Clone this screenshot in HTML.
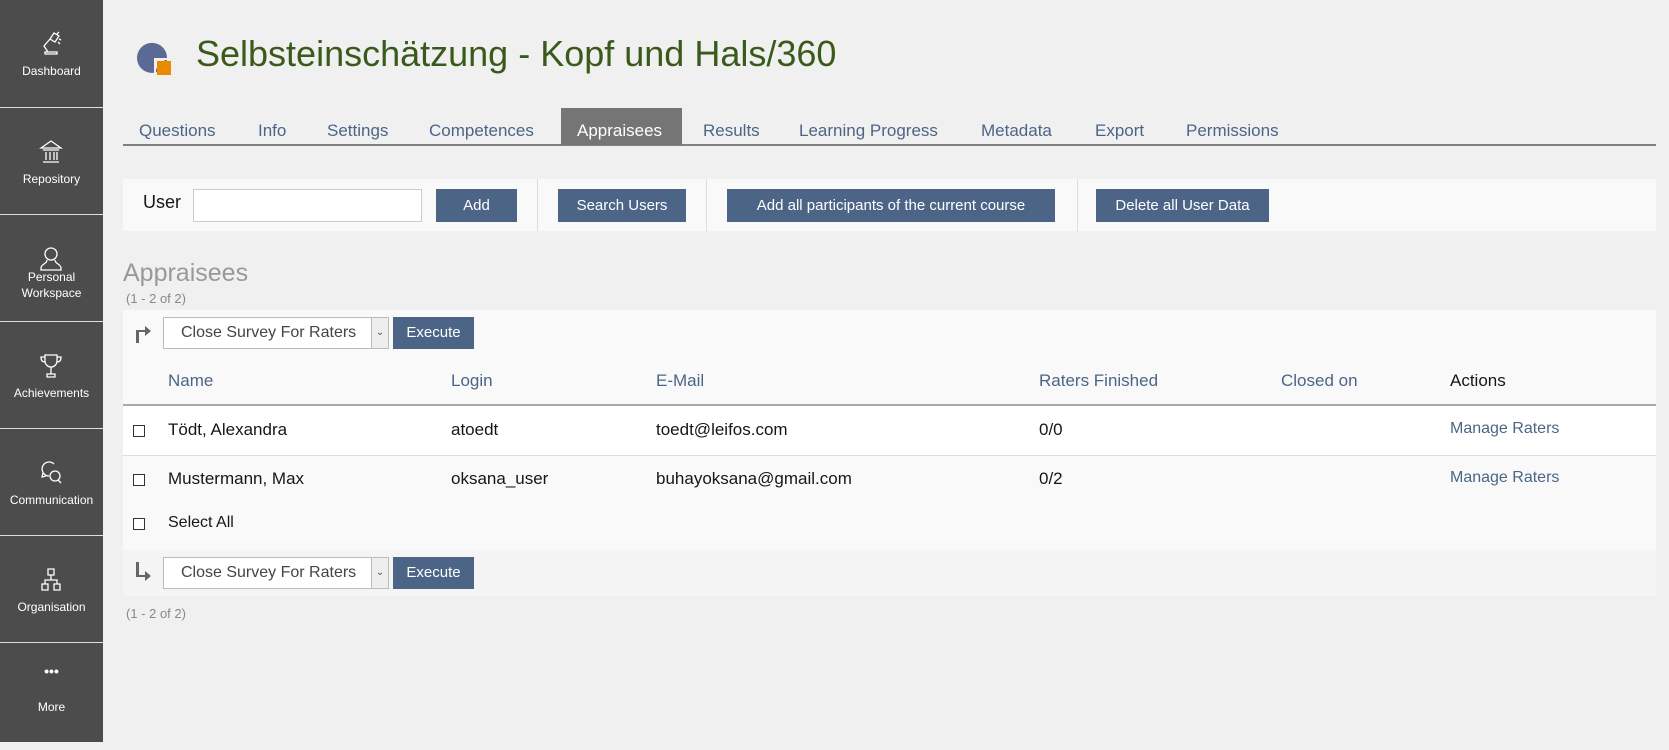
<!DOCTYPE html>
<html><head><meta charset="utf-8"><style>
*{box-sizing:border-box;margin:0;padding:0}
body{width:1669px;height:742px;background:#f0f0f0;font-family:"Liberation Sans",sans-serif;position:relative;overflow:hidden;color:#161616}
.sb{position:absolute;left:0;top:0;width:103px;height:742px;background:#4c4c4c}
.si{position:absolute;left:0;width:103px;height:107px;border-bottom:1px solid #ddd;color:#fff;font-size:12px;text-align:center}
.si svg{position:absolute;left:39px;top:30px}
.si span{position:absolute;left:0;right:0;line-height:16px}
.a{position:absolute;white-space:nowrap}
.btn{position:absolute;background:#4c6586;color:#fff;font-size:15px;text-align:center;line-height:33px;height:33px}
.tab{position:absolute;top:121px;font-size:17px;color:#4c6586}
.th{position:absolute;top:371px;font-size:17px;color:#4c6586}
.td{position:absolute;font-size:17px;color:#161616}
.cb{position:absolute;left:133px;width:12px;height:12px;border:1px solid #333;background:#fff}
.sel{position:absolute;left:163px;width:226px;height:32px;background:#fff;border:1px solid #bbb;font-size:16px;color:#444;padding-left:17px;line-height:30px}
.sel i{position:absolute;right:0;top:0;width:17px;height:30px;border-left:1px solid #bbb;background:#eee;font-style:normal;font-size:10px;text-align:center;color:#555}
.ml{position:absolute;left:1450px;font-size:16px;color:#4c6586}
</style></head><body>
<div class="sb">
<div class="si" style="top:0;height:108px"><svg width="24" height="28" viewBox="0 0 24 28" fill="none" stroke="#fff" stroke-width="1.3"><path d="M6 24h12v-2H6zM9 22l-4-6 6-7M11 9l4-6 5 3-4 6zM20 9l2 1M19 12l2 2M18 4l2-2"/></svg><span style="top:63px">Dashboard</span></div>
<div class="si" style="top:108px"><svg width="24" height="28" viewBox="0 0 24 28" fill="none" stroke="#fff" stroke-width="1.3"><path d="M2 10L12 3l10 7zM4 12h16M4 24h16M7 14v8M11 14v8M15 14v8M18 14v8"/></svg><span style="top:63px">Repository</span></div>
<div class="si" style="top:215px"><svg width="24" height="28" viewBox="0 0 24 28" fill="none" stroke="#fff" stroke-width="1.3"><circle cx="12" cy="9" r="6"/><path d="M8 15c0 4-6 4-6 8v2h20v-2c0-4-6-4-6-8"/></svg><span style="top:54px">Personal<br>Workspace</span></div>
<div class="si" style="top:322px"><svg width="24" height="28" viewBox="0 0 24 28" fill="none" stroke="#fff" stroke-width="1.3"><path d="M6 3h12v6a6 6 0 0 1-12 0zM6 5H2c0 4 2 5 4 5M18 5h4c0 4-2 5-4 5M12 15v7M8 25h8v-3H8z"/></svg><span style="top:63px">Achievements</span></div>
<div class="si" style="top:429px"><svg width="24" height="28" viewBox="0 0 24 28" fill="none" stroke="#fff" stroke-width="1.3"><path d="M10 17a7 7 0 1 1 5-12M4 14l-1 4 4-1"/><circle cx="16" cy="17" r="5"/><path d="M19 21l3 3"/></svg><span style="top:63px">Communication</span></div>
<div class="si" style="top:536px"><svg width="24" height="28" viewBox="0 0 24 28" fill="none" stroke="#fff" stroke-width="1.3"><path d="M9 3h6v6H9zM3 18h6v6H3zM15 18h6v6h-6zM12 9v5M6 18v-4h12v4"/></svg><span style="top:63px">Organisation</span></div>
<div class="si" style="top:643px;border:none"><span style="top:20px;font-size:14px;font-weight:bold">•••</span><span style="top:56px">More</span></div>
</div>
<svg class="a" style="left:136px;top:40px" width="36" height="36" viewBox="0 0 36 36"><path d="M31 18A15 15 0 1 1 18 3A15 15 0 0 1 31 18H18v13" fill="#5a6a94"/><rect x="21" y="21" width="14" height="14" fill="#e98a00"/><path d="M18 18h15v2H20v13h-2z" fill="#f0f0f0"/></svg>
<div class="a" style="left:196px;top:33px;font-size:36px;color:#3a5a1c">Selbsteinschätzung - Kopf und Hals/360</div>
<div class="a" style="left:123px;top:144px;width:1533px;height:2px;background:#808080"></div>
<div class="a" style="left:561px;top:108px;width:121px;height:37px;background:#757575"></div>
<div class="tab" style="left:139px">Questions</div>
<div class="tab" style="left:258px">Info</div>
<div class="tab" style="left:327px">Settings</div>
<div class="tab" style="left:429px">Competences</div>
<div class="tab" style="left:577px;color:#fff">Appraisees</div>
<div class="tab" style="left:703px">Results</div>
<div class="tab" style="left:799px">Learning Progress</div>
<div class="tab" style="left:981px">Metadata</div>
<div class="tab" style="left:1095px">Export</div>
<div class="tab" style="left:1186px">Permissions</div>
<div class="a" style="left:123px;top:179px;width:1533px;height:52px;background:#f9f9f9"></div>
<div class="a" style="left:143px;top:192px;font-size:18px">User</div>
<div class="a" style="left:193px;top:189px;width:229px;height:33px;background:#fff;border:1px solid #ccc"></div>
<div class="btn" style="left:436px;top:189px;width:81px">Add</div>
<div class="a" style="left:537px;top:179px;width:1px;height:52px;background:#ddd"></div>
<div class="btn" style="left:558px;top:189px;width:128px">Search Users</div>
<div class="a" style="left:706px;top:179px;width:1px;height:52px;background:#ddd"></div>
<div class="btn" style="left:727px;top:189px;width:328px">Add all participants of the current course</div>
<div class="a" style="left:1077px;top:179px;width:1px;height:52px;background:#ddd"></div>
<div class="btn" style="left:1096px;top:189px;width:173px">Delete all User Data</div>
<div class="a" style="left:123px;top:259px;font-size:25px;color:#999">Appraisees</div>
<div class="a" style="left:126px;top:291px;font-size:13px;color:#888">(1 - 2 of 2)</div>
<div class="a" style="left:123px;top:310px;width:1533px;height:286px;background:#f9f9f9"></div>
<div class="a" style="left:123px;top:406px;width:1533px;height:49px;background:#fff"></div>
<div class="a" style="left:123px;top:404px;width:1533px;height:2px;background:#aaa"></div>
<div class="a" style="left:123px;top:455px;width:1533px;height:1px;background:#ddd"></div>
<svg class="a" style="left:134px;top:323px" width="18" height="20" viewBox="0 0 18 20"><path d="M2 20V7h9V3l6 5-6 5V9H5v11z" fill="#666"/></svg>
<div class="sel" style="top:317px">Close Survey For Raters<i>⌄</i></div>
<div class="btn" style="left:393px;top:317px;width:81px;height:32px;line-height:32px">Execute</div>
<div class="th" style="left:168px">Name</div>
<div class="th" style="left:451px">Login</div>
<div class="th" style="left:656px">E-Mail</div>
<div class="th" style="left:1039px">Raters Finished</div>
<div class="th" style="left:1281px">Closed on</div>
<div class="th" style="left:1450px;color:#161616">Actions</div>
<div class="cb" style="top:425px"></div>
<div class="td" style="left:168px;top:420px">Tödt, Alexandra</div>
<div class="td" style="left:451px;top:420px">atoedt</div>
<div class="td" style="left:656px;top:420px">toedt@leifos.com</div>
<div class="td" style="left:1039px;top:420px">0/0</div>
<div class="ml" style="top:420px">Manage Raters</div>
<div class="cb" style="top:474px"></div>
<div class="td" style="left:168px;top:469px">Mustermann, Max</div>
<div class="td" style="left:451px;top:469px">oksana_user</div>
<div class="td" style="left:656px;top:469px">buhayoksana@gmail.com</div>
<div class="td" style="left:1039px;top:469px">0/2</div>
<div class="ml" style="top:469px">Manage Raters</div>
<div class="cb" style="top:518px"></div>
<div class="td" style="left:168px;top:514px;font-size:16px">Select All</div>
<div class="a" style="left:123px;top:550px;width:1533px;height:46px;background:#f4f4f4"></div>
<svg class="a" style="left:134px;top:562px" width="18" height="22" viewBox="0 0 18 22"><path d="M2 0v15h9v4l6-5-6-5v4H5V0z" fill="#666"/></svg>
<div class="sel" style="top:557px">Close Survey For Raters<i>⌄</i></div>
<div class="btn" style="left:393px;top:557px;width:81px;height:32px;line-height:32px">Execute</div>
<div class="a" style="left:126px;top:606px;font-size:13px;color:#888">(1 - 2 of 2)</div>
</body></html>
